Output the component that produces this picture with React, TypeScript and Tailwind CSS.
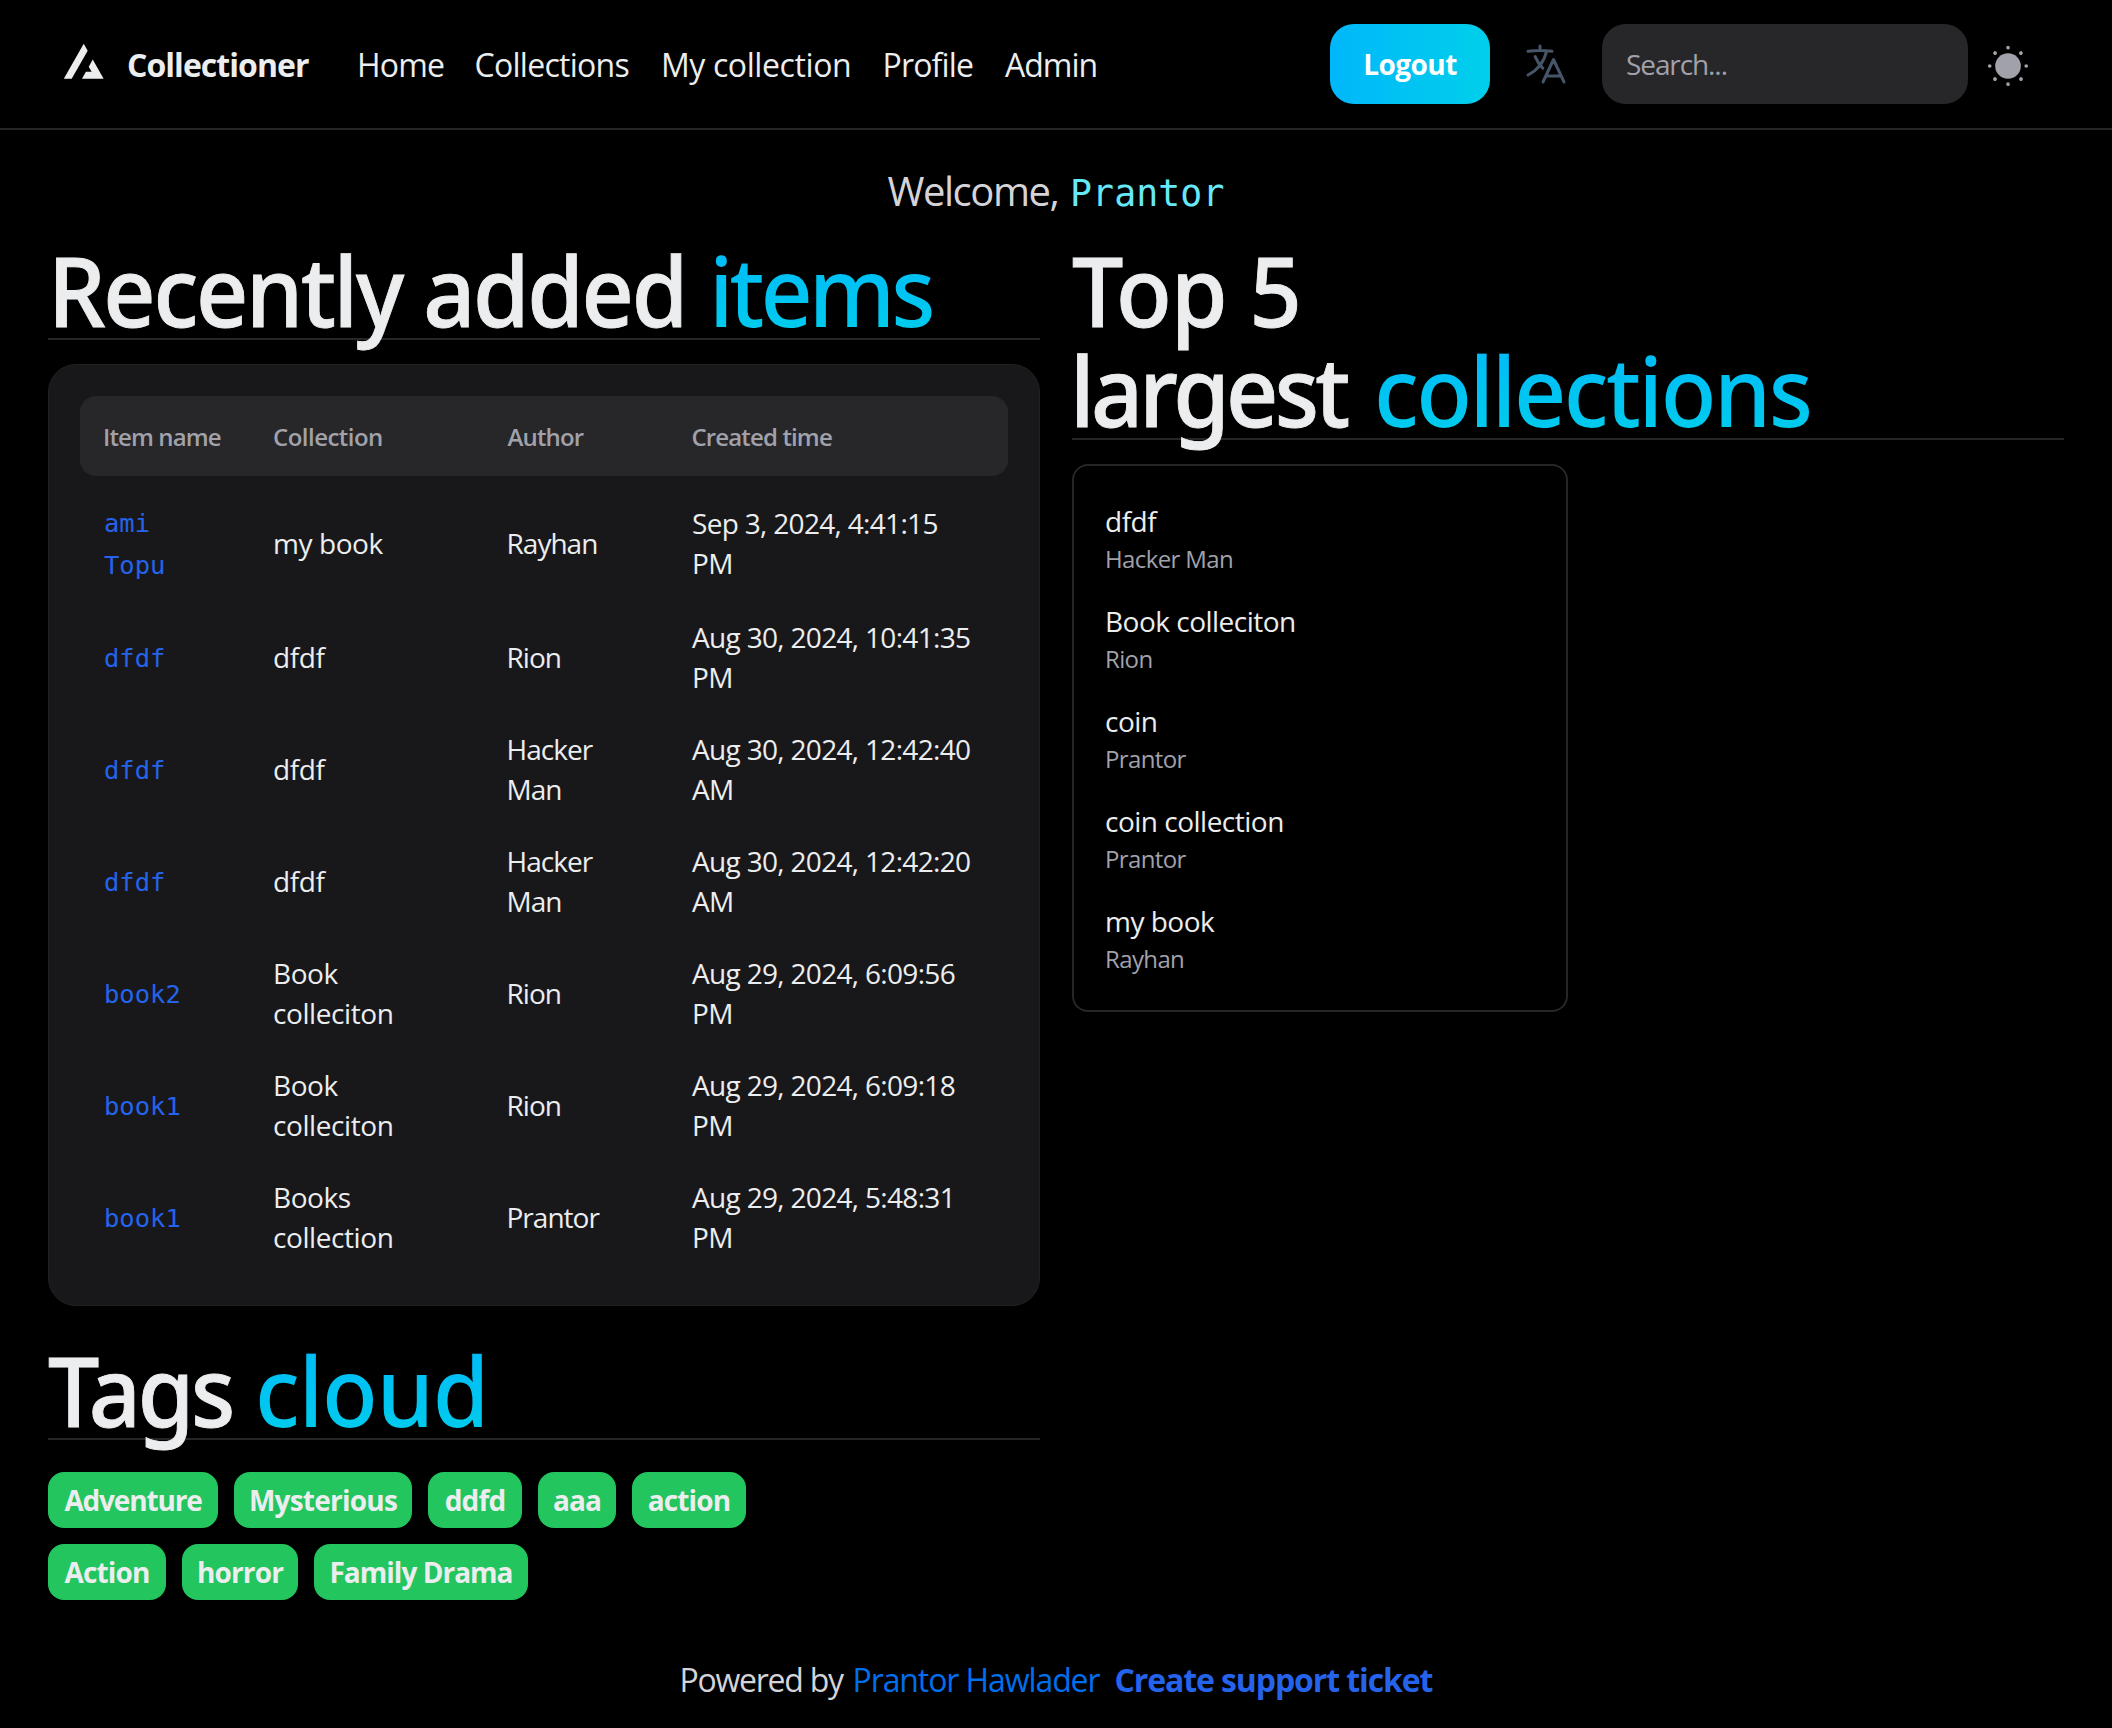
import type { ReactNode } from "react";

const navItems = [
  { label: "Home", cls: "w-[117.5px] tracking-[-0.026em]" },
  { label: "Collections", cls: "w-[186.5px] tracking-[-0.0226em]" },
  { label: "My collection", cls: "w-[221.5px] tracking-[-0.0127em]" },
  { label: "Profile", cls: "w-[122.5px] tracking-[-0.026em]" },
  { label: "Admin", cls: "tracking-[-0.031em]" },
];

const items = [
  { name: "ami Topu", collection: "my book", author: "Rayhan", date: "Sep 3, 2024, 4:41:15", half: "PM" },
  { name: "dfdf", collection: "dfdf", author: "Rion", date: "Aug 30, 2024, 10:41:35", half: "PM" },
  { name: "dfdf", collection: "dfdf", author: "Hacker Man", date: "Aug 30, 2024, 12:42:40", half: "AM" },
  { name: "dfdf", collection: "dfdf", author: "Hacker Man", date: "Aug 30, 2024, 12:42:20", half: "AM" },
  { name: "book2", collection: "Book colleciton", author: "Rion", date: "Aug 29, 2024, 6:09:56", half: "PM" },
  { name: "book1", collection: "Book colleciton", author: "Rion", date: "Aug 29, 2024, 6:09:18", half: "PM" },
  { name: "book1", collection: "Books collection", author: "Prantor", date: "Aug 29, 2024, 5:48:31", half: "PM" },
];

const collections = [
  { name: "dfdf", owner: "Hacker Man" },
  { name: "Book colleciton", owner: "Rion" },
  { name: "coin", owner: "Prantor" },
  { name: "coin collection", owner: "Prantor" },
  { name: "my book", owner: "Rayhan" },
];

const tags = [
  { label: "Adventure", cls: "w-[170px] tracking-[-0.042em]" },
  { label: "Mysterious", cls: "w-[178px] tracking-[-0.0275em]" },
  { label: "ddfd", cls: "w-[94px] tracking-[-0.03em]" },
  { label: "aaa", cls: "w-[78px] tracking-[-0.03em]" },
  { label: "action", cls: "w-[114px] tracking-[-0.03em]" },
  { label: "Action", cls: "w-[118px] tracking-[-0.03em]" },
  { label: "horror", cls: "w-[116px] tracking-[-0.03em]" },
  { label: "Family Drama", cls: "w-[214px] tracking-[-0.035em]" },
];

function Logo() {
  return (
    <svg width="72" height="72" viewBox="0 0 32 32" fill="none" className="shrink-0">
      <path
        clipRule="evenodd"
        fillRule="evenodd"
        fill="currentColor"
        d="M17.6482 10.1305L15.8785 7.02583L7.02979 22.5499H10.5278L17.6482 10.1305ZM19.8798 14.0457L18.11 17.1983L19.394 19.4511H16.8453L15.1056 22.5499H24.7272L19.8798 14.0457Z"
      />
    </svg>
  );
}

function LanguageIcon() {
  return (
    <svg width="48" height="48" viewBox="0 0 24 24" fill="none" stroke="currentColor" strokeWidth="1.5" strokeLinecap="round" strokeLinejoin="round" className="shrink-0 text-[#475569]">
      <path d="m10.5 21 5.25-11.25L21 21m-9-3h7.5M3 5.621a48.474 48.474 0 0 1 6-.371m0 0c1.12 0 2.233.038 3.334.114M9 5.25V3m3.334 2.364C11.176 10.658 7.69 15.08 3 17.502m9.334-12.138c.896.061 1.785.147 2.666.257m-4.589 8.495a18.023 18.023 0 0 1-3.827-5.802" />
    </svg>
  );
}

function SunIcon() {
  return (
    <svg width="44" height="44" viewBox="0 0 24 24" fill="currentColor" className="shrink-0 text-[#a1a1aa]">
      <path d="M19 12a7 7 0 11-7-7 7 7 0 017 7z" />
      <path d="M12 22.96a.969.969 0 01-1-.96v-.08a1 1 0 012 0 1.038 1.038 0 01-1 1.04zm7.14-2.82a1.024 1.024 0 01-.71-.29l-.13-.13a1 1 0 011.41-1.41l.13.13a1 1 0 010 1.41.984.984 0 01-.7.29zm-14.28 0a1.024 1.024 0 01-.71-.29 1 1 0 010-1.41l.13-.13a1 1 0 011.41 1.41l-.13.13a1 1 0 01-.7.29zM22 13h-.08a1 1 0 010-2 1.038 1.038 0 011.04 1 .969.969 0 01-.96 1zM2.08 13H2a1 1 0 010-2 1.038 1.038 0 011.04 1 .969.969 0 01-.96 1zm16.93-7.01a1.024 1.024 0 01-.71-.29 1 1 0 010-1.41l.13-.13a1 1 0 011.41 1.41l-.13.13a.984.984 0 01-.7.29zm-14.02 0a1.024 1.024 0 01-.71-.29l-.13-.14a1 1 0 011.41-1.41l.13.13a1 1 0 010 1.41.97.97 0 01-.7.3zM12 3.04a.969.969 0 01-1-.96V2a1 1 0 012 0 1.038 1.038 0 01-1 1.04z" />
    </svg>
  );
}

function Word({ className, accent, children }: { className: string; accent?: boolean; children: ReactNode }) {
  return (
    <span className={`shrink-0 origin-left scale-x-[0.95] ${className}`}>
      {accent ? (
        <span className="bg-gradient-to-b from-[#00b7fa] to-[#01cfea] bg-clip-text pr-2 text-transparent">{children}</span>
      ) : (
        <span className="[-webkit-text-stroke:0.9px_#ecedee]">{children}</span>
      )}
    </span>
  );
}

function Line({ children }: { children: ReactNode }) {
  return <span className="flex h-[100px] items-baseline whitespace-pre pt-0.5">{children}</span>;
}

function Heading({ children }: { children: ReactNode }) {
  return (
    <h2 className="border-b-2 border-[#262626] font-['Noto_Sans',sans-serif] text-[96px] font-medium leading-[100px]">
      {children}
    </h2>
  );
}

function Header() {
  return (
    <header className="flex h-[130px] items-center border-b-2 border-[#262626] pl-12">
      <Logo />
      <span className="w-[237px] shrink-0 pl-[7px] pt-px text-[32px] font-bold leading-[48px] tracking-[-0.03em]">Collectioner</span>
      <nav className="flex pt-px text-[32px] leading-[48px]">
        {navItems.map((n) => (
          <a key={n.label} className={`shrink-0 whitespace-nowrap ${n.cls}`}>{n.label}</a>
        ))}
      </nav>
      <div className="ml-auto flex items-center pr-[82px]">
        <button className="flex h-20 w-40 items-center justify-center rounded-[24px] bg-gradient-to-r from-[#00b7fa] to-[#01cfea] text-[28px] font-bold leading-[40px] tracking-[-0.0194em] text-white">
          Logout
        </button>
        <span className="ml-8 mr-8"><LanguageIcon /></span>
        <div className="flex h-20 w-[366px] items-center rounded-[24px] bg-[#27272a] px-6 text-[28px] leading-[40px] tracking-[-0.039em] text-[#a1a1aa]">
          Search...
        </div>
        <span className="ml-[18px] mt-[3px]"><SunIcon /></span>
      </div>
    </header>
  );
}

function ItemsTable() {
  return (
    <div className="mt-6 h-[942px] rounded-[28px] border border-[#222225] bg-[#18181b] px-[31px] pt-[31px]">
      <div className="flex h-20 items-center rounded-[16px] bg-[#27272a] pt-0.5 text-[24px] font-semibold leading-[32px] text-[#a1a1aa]">
        <span className="w-[193px] pl-[23px] tracking-[-0.037em]">Item name</span>
        <span className="w-[234.5px] tracking-[-0.022em]">Collection</span>
        <span className="w-[184px] tracking-[-0.035em]">Author</span>
        <span className="tracking-[-0.036em]">Created time</span>
      </div>
      <div className="pt-[9px]">
        {items.map((it, i) => (
          <div key={i} className="flex h-28 items-center text-[28px] leading-[40px] tracking-[-0.035em] first:h-[116px]">
            <span className="w-[193px] pl-6 pr-20 pt-0.5 font-['DejaVu_Sans_Mono',monospace] text-[25.5px] leading-[42px] tracking-normal text-[#2563eb]">
              {it.name}
            </span>
            <span className="w-[233.5px] pr-[100px] tracking-[-0.015em]">{it.collection}</span>
            <span className="w-[185.5px] pr-[90px]">{it.author}</span>
            <span className="whitespace-nowrap tracking-[-0.0242em]">{it.date}<br />{it.half}</span>
          </div>
        ))}
      </div>
    </div>
  );
}

export default function App() {
  return (
    <div className="h-[1728px] w-full overflow-hidden bg-black font-['Open_Sans',sans-serif] text-[#ecedee]">
      <Header />
      <p className="flex h-[90px] items-baseline pl-[887.5px] pt-[31px] text-[40px] leading-[60px] text-[#d4d4d8]">
        <span className="w-[182.5px] shrink-0 tracking-[-0.0365em]">Welcome,</span>
        <span className="font-['DejaVu_Sans_Mono',monospace] text-[36.5px] tracking-[0.1px] text-[#67e8f9]">Prantor</span>
      </p>
      <main className="mt-[18px] grid grid-cols-2 gap-x-8 px-12">
        <section>
          <Heading>
            <Line>
              <Word className="w-[661px] tracking-[-0.025em]">Recently added</Word>
              <Word accent className="tracking-[-0.044em]">items</Word>
            </Line>
          </Heading>
          <ItemsTable />
          <div className="mt-8">
            <Heading>
              <Line>
                <Word className="w-[207px] tracking-[-0.035em]">Tags</Word>
                <Word accent className="tracking-[-0.0125em]">cloud</Word>
              </Line>
            </Heading>
          </div>
          <div className="mt-8 flex w-[720px] flex-wrap gap-4">
            {tags.map((t) => (
              <span key={t.label} className={`flex h-14 items-center justify-center whitespace-nowrap rounded-[16px] bg-[#22c55e] pb-px text-[28px] font-bold leading-[40px] ${t.cls}`}>
                {t.label}
              </span>
            ))}
          </div>
        </section>
        <section>
          <Heading>
            <Line><Word className="tracking-[-0.009em]">Top 5</Word></Line>
            <Line>
              <Word className="-ml-0.5 w-[304px] tracking-[-0.041em]">largest</Word>
              <Word accent className="tracking-[-0.027em]">collections</Word>
            </Line>
          </Heading>
          <ul className="mt-6 h-[548px] w-1/2 rounded-[16px] border-2 border-[#262626] px-[31px] pt-[22px]">
            {collections.map((c) => (
              <li key={c.name} className="flex h-[100px] flex-col gap-0.5 pt-[13px]">
                <span className="text-[28px] leading-[40px] tracking-[-0.018em]">{c.name}</span>
                <span className="text-[24px] leading-[32px] tracking-[-0.026em] text-[#a1a1aa]">{c.owner}</span>
              </li>
            ))}
          </ul>
        </section>
      </main>
      <footer className="mt-14 flex whitespace-nowrap pl-[679.5px] text-[32px] leading-[48px]">
        <span className="w-[173px] tracking-[-0.0392em] text-[#d4d4d8]">Powered by</span>
        <span className="w-[262px] tracking-[-0.0341em] text-[#006fee]">Prantor Hawlader</span>
        <span className="font-bold tracking-[-0.0345em] text-[#2563eb]">Create support ticket</span>
      </footer>
    </div>
  );
}
